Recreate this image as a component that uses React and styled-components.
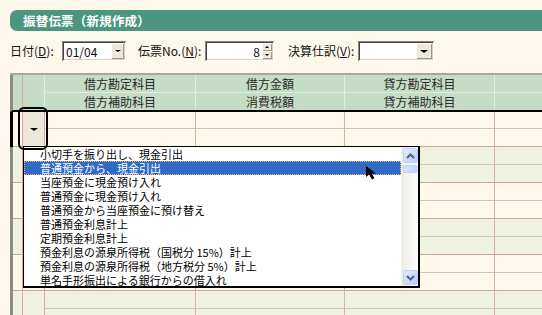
import React from "react";
import styled, { createGlobalStyle } from "styled-components";

const GlobalStyle = createGlobalStyle`
  * { box-sizing: border-box; }
  html, body { margin: 0; padding: 0; background: #fdf8eb; }
  body { font-family: "Noto Sans CJK JP", "Noto Sans", sans-serif; }
`;

const Page = styled.div`
  position: relative;
  width: 542px;
  height: 315px;
  overflow: hidden;
  background: #fdf8eb;
  padding-top: 10px;
  font-size: 12px;
  color: #111;
`;

const TitleBar = styled.div`
  margin-left: 10px;
  height: 21px;
  background: #4b9581;
  border-radius: 7px 0 0 7px;
  padding-left: 13px;
  display: flex;
  align-items: center;
  color: #fff;
  font-weight: bold;
  font-size: 12.5px;
  letter-spacing: 0.2px;
`;

const FieldRow = styled.div`
  margin-top: 10px;
  height: 20px;
  padding-left: 10px;
  display: flex;
  align-items: center;
`;

const Field = styled.div`
  display: flex;
  align-items: center;
  margin-left: ${(p) => p.$gap || 0}px;
`;

const Label = styled.label`
  width: ${(p) => p.$w}px;
  font-size: 12px;
  line-height: 20px;
  white-space: nowrap;
  u { text-decoration: underline; }
`;

const Sunken = styled.div`
  position: relative;
  width: ${(p) => p.$w}px;
  height: 20px;
  background: #fff;
  box-shadow: inset 1px 1px #8c8a80, inset -1px -1px #ffffff,
    inset 2px 2px #404040, inset -2px -2px #d4d0c8;
  display: flex;
  align-items: center;
  justify-content: ${(p) => (p.$right ? "flex-end" : "flex-start")};
  padding: 0 ${(p) => p.$pr || 3}px 0 4px;
  font-size: 12px;
`;

const SmallButton = styled.span`
  position: absolute;
  right: 2px;
  top: 2px;
  bottom: 2px;
  width: ${(p) => p.$w}px;
  background: #ece9d8;
  box-shadow: inset 1px 1px #fff, inset -1px -1px #9d9a8c;
  display: flex;
  align-items: center;
  justify-content: center;
`;

const SpinBox = styled.span`
  position: absolute;
  right: 2px;
  top: 2px;
  bottom: 2px;
  width: 10px;
  display: flex;
  flex-direction: column;
`;

const SpinHalf = styled.span`
  flex: 1;
  background: #ece9d8;
  box-shadow: inset 1px 1px #fff, inset -1px -1px #9d9a8c;
  display: flex;
  align-items: center;
  justify-content: center;
`;

const Tri = styled.span`
  width: 0;
  height: 0;
  border-left: ${(p) => p.$s}px solid transparent;
  border-right: ${(p) => p.$s}px solid transparent;
  ${(p) =>
    p.$up
      ? `border-bottom: ${Math.ceil(p.$s / 1.5)}px solid #000;`
      : `border-top: ${Math.ceil(p.$s / 1.5)}px solid #000;`}
`;

const Grid = styled.div`
  margin-top: 12px;
  margin-left: 10px;
  border-top: 2px solid #aaa698;
`;

const Band = styled.div`
  display: grid;
  grid-template-columns: 10px 22px 151px 149px 150px 1fr;
  grid-template-rows: ${(p) => p.$rows || "18px 18px"};
  border-left: 3px solid ${(p) => (p.$current ? "#000" : "#8d8a80")};
  ${(p) => (p.$head ? "border-bottom: 2px solid #000;" : "")}
`;

const Cell = styled.div`
  background: ${(p) => p.$bg};
  border-right: ${(p) => (p.$right ? `1px solid ${p.$right}` : "none")};
  border-bottom: ${(p) => (p.$bottom ? `1px solid ${p.$bottom}` : "none")};
  grid-row: ${(p) => (p.$span ? "span 2" : "auto")};
  display: flex;
  align-items: center;
  justify-content: center;
  font-size: 12px;
  color: #2a2a2a;
  overflow: hidden;
  white-space: nowrap;
`;

const DropCell = styled.div`
  grid-row: span 2;
  border-right: 1px solid #e4a2a2;
  border-bottom: 1px solid #c4a898;
  background: #ebe8d9;
  display: flex;
  align-items: center;
  justify-content: center;
`;

const FocusRing = styled.div`
  position: absolute;
  left: 18px;
  top: 107px;
  width: 30px;
  height: 43px;
  border: 2px solid #000;
  border-radius: 6px;
  z-index: 3;
`;

const ListBox = styled.div`
  position: absolute;
  left: 23px;
  top: 146px;
  width: 397px;
  height: 142px;
  border: 1px solid #000;
  border-right-width: 2px;
  border-bottom-width: 2px;
  background: #fff;
  display: flex;
  z-index: 2;
`;

const Items = styled.ul`
  flex: 1;
  margin: 0;
  padding: 0;
  list-style: none;
`;

const Item = styled.li`
  height: 14px;
  line-height: 14px;
  padding-left: 16px;
  font-size: 11px;
  white-space: nowrap;
  color: ${(p) => (p.$active ? "#fff" : "#000")};
  background: ${(p) => (p.$active ? "#316ac5" : "transparent")};
  outline: ${(p) => (p.$active ? "1px dotted #f2c15a" : "none")};
  outline-offset: -1px;
`;

const ScrollTrack = styled.div`
  width: 17px;
  display: flex;
  flex-direction: column;
  padding: 1px 0 1px 2px;
  background: linear-gradient(to right, #eeede5, #fcfcfa);
`;

const ScrollButton = styled.div`
  width: 15px;
  height: 15px;
  border: 1px solid #c3d2fa;
  border-radius: 2px;
  background: linear-gradient(135deg, #e4ecfe, #b8cbf8);
  display: flex;
  align-items: center;
  justify-content: center;
`;

const Thumb = styled.div`
  width: 15px;
  height: 8px;
  margin-top: 2px;
  border: 1px solid #c3d2fa;
  border-radius: 2px;
  background: linear-gradient(to right, #d4e0fd, #c2d3fc);
`;

const Spacer = styled.div`
  flex: 1;
`;

const Cursor = styled.svg`
  position: absolute;
  left: 366px;
  top: 166px;
  z-index: 4;
`;

const HEAD = "#c5dcc5";
const HEAD_LINE = "#e3ebe2";
const CREAM = "#fdf8ea";
const GREEN = "#eef2df";
const PINK = "#e4a2a2";
const VLINE = "#d5b1a2";
const INNER = "#d8c3b3";
const OUTER = "#c4a898";

const items = [
  "小切手を振り出し、現金引出",
  "普通預金から、現金引出",
  "当座預金に現金預け入れ",
  "普通預金に現金預け入れ",
  "普通預金から当座預金に預け替え",
  "普通預金利息計上",
  "定期預金利息計上",
  "預金利息の源泉所得税（国税分 15%）計上",
  "預金利息の源泉所得税（地方税分 5%）計上",
  "単名手形振出による銀行からの借入れ",
];

const Chevron = ({ up }) => (
  <svg width="9" height="6" viewBox="0 0 9 6">
    <path
      d={up ? "M1 5 L4.5 1.5 L8 5" : "M1 1 L4.5 4.5 L8 1"}
      fill="none"
      stroke="#4d6185"
      strokeWidth="2"
    />
  </svg>
);

const Entry = ({ bg, current, rows }) => (
  <Band $current={current} $rows={rows}>
    <Cell $span $bg={bg} $right={PINK} $bottom={OUTER} />
    {current ? (
      <DropCell>
        <Tri $s={4} />
      </DropCell>
    ) : (
      <Cell $span $bg={bg} $right={PINK} $bottom={OUTER} />
    )}
    <Cell $bg={bg} $right="#e3aca6" $bottom={INNER} />
    <Cell $bg={bg} $right={VLINE} $bottom={INNER} />
    <Cell $bg={bg} $right={VLINE} $bottom={INNER} />
    <Cell $bg={bg} $bottom={INNER} />
    <Cell $bg={bg} $right="#e3aca6" $bottom={OUTER} />
    <Cell $bg={bg} $right={VLINE} $bottom={OUTER} />
    <Cell $bg={bg} $right={VLINE} $bottom={OUTER} />
    <Cell $bg={bg} $bottom={OUTER} />
  </Band>
);

export default function App() {
  return (
    <Page>
      <GlobalStyle />
      <TitleBar>振替伝票（新規作成）</TitleBar>

      <FieldRow>
        <Field>
          <Label $w={52}>
            日付(<u>D</u>):
          </Label>
          <Sunken $w={64}>
            01/04
            <SmallButton $w={13}>
              <Tri $s={3} />
            </SmallButton>
          </Sunken>
        </Field>
        <Field $gap={12}>
          <Label $w={67}>
            伝票No.(<u>N</u>):
          </Label>
          <Sunken $w={69} $right $pr={14}>
            8
            <SpinBox>
              <SpinHalf>
                <Tri $s={2} $up />
              </SpinHalf>
              <SpinHalf>
                <Tri $s={2} />
              </SpinHalf>
            </SpinBox>
          </Sunken>
        </Field>
        <Field $gap={14}>
          <Label $w={70}>
            決算仕訳(<u>V</u>):
          </Label>
          <Sunken $w={76}>
            <SmallButton $w={16}>
              <Tri $s={4} />
            </SmallButton>
          </Sunken>
        </Field>
      </FieldRow>

      <Grid>
        <Band $head $rows="18px 17px">
          <Cell $span $bg={HEAD} $right={PINK} />
          <Cell $span $bg={HEAD} $right={HEAD_LINE} />
          <Cell $bg={HEAD} $right={HEAD_LINE} $bottom={HEAD_LINE}>借方勘定科目</Cell>
          <Cell $bg={HEAD} $right={HEAD_LINE} $bottom={HEAD_LINE}>借方金額</Cell>
          <Cell $bg={HEAD} $right={HEAD_LINE} $bottom={HEAD_LINE}>貸方勘定科目</Cell>
          <Cell $bg={HEAD} $bottom={HEAD_LINE} />
          <Cell $bg={HEAD} $right={HEAD_LINE}>借方補助科目</Cell>
          <Cell $bg={HEAD} $right={HEAD_LINE}>消費税額</Cell>
          <Cell $bg={HEAD} $right={HEAD_LINE}>貸方補助科目</Cell>
          <Cell $bg={HEAD} />
        </Band>
        <Entry bg={CREAM} current rows="17px 18px" />
        <Entry bg={GREEN} />
        <Entry bg={CREAM} />
        <Entry bg={GREEN} />
        <Entry bg={CREAM} />
        <Entry bg={GREEN} />
      </Grid>

      <FocusRing />

      <ListBox>
        <Items>
          {items.map((text, i) => (
            <Item key={text} $active={i === 1}>
              {text}
            </Item>
          ))}
        </Items>
        <ScrollTrack>
          <ScrollButton>
            <Chevron up />
          </ScrollButton>
          <Thumb />
          <Spacer />
          <ScrollButton>
            <Chevron />
          </ScrollButton>
        </ScrollTrack>
      </ListBox>

      <Cursor width="13" height="14" viewBox="0 0 13 14">
        <path d="M0 0 L0 11 L3 8.5 L6 13.5 L8.5 12 L5.5 7.5 L10 7.5 Z" fill="#000" />
      </Cursor>
    </Page>
  );
}
